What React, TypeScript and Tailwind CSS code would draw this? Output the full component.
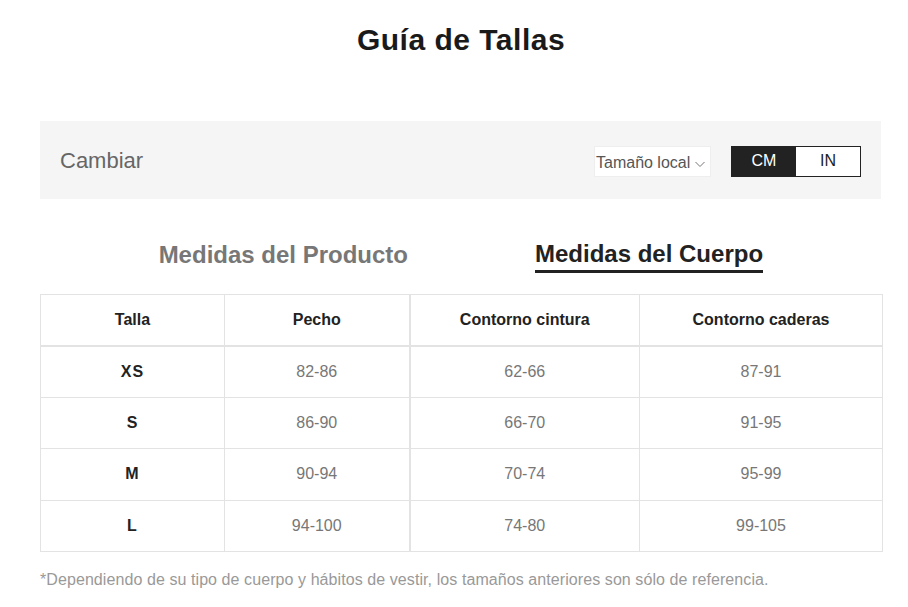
import React, { useState } from 'react';

const rows = [
  { size: 'XS', chest: '82-86', waist: '62-66', hips: '87-91' },
  { size: 'S', chest: '86-90', waist: '66-70', hips: '91-95' },
  { size: 'M', chest: '90-94', waist: '70-74', hips: '95-99' },
  { size: 'L', chest: '94-100', waist: '74-80', hips: '99-105' },
];

export default function App() {
  const [unit, setUnit] = useState<'CM' | 'IN'>('CM');
  const [tab, setTab] = useState<'product' | 'body'>('body');

  return (
    <div className="min-h-screen bg-white font-['Liberation_Sans',Arial,sans-serif]">
      <div className="w-[841px] ml-[40px]">
        <h1 className="h-[80px] pt-[20px] text-center text-[30px] leading-[40px] font-bold tracking-[0.5px] text-[#1a1a1a] pl-[1px]">
          Guía de Tallas
        </h1>

        <div className="mt-[41px] h-[78px] bg-[#f5f5f5] flex items-center justify-between pl-[20px] pr-[20px]">
          <span className="text-[22px] text-[#666]">Cambiar</span>
          <div className="flex items-center gap-[20px] pt-[2px]">
            <button className="h-[31px] w-[117px] bg-white border border-[#eee] flex items-center pl-[1px] pt-[3px] text-[16px] text-[#555]">
              Tamaño local
              <svg width="12" height="12" viewBox="0 0 12 12" className="ml-[4px] mt-[3px]">
                <path d="M1.5 4 L6 8.5 L10.5 4" fill="none" stroke="#777" strokeWidth="1" />
              </svg>
            </button>
            <div className="flex h-[31px] border border-[#222]">
              {(['CM', 'IN'] as const).map(u => (
                <button
                  key={u}
                  onClick={() => setUnit(u)}
                  className={
                    unit === u
                      ? 'w-[64px] bg-[#222] text-white text-[16px]'
                      : 'w-[64px] bg-white text-[#222] text-[16px]'
                  }
                >
                  {u}
                </button>
              ))}
            </div>
          </div>
        </div>

        <div className="flex h-[95px] pt-[38px]">
          <div className="w-[368px] flex justify-end">
            <button
              onClick={() => setTab('product')}
              className={
                tab === 'product'
                  ? 'h-[36px] text-[24px] leading-[32px] font-bold text-[#222] border-b-[3px] border-[#222]'
                  : 'h-[36px] text-[24px] leading-[32px] font-bold text-[#777]'
              }
            >
              Medidas del Producto
            </button>
          </div>
          <div className="flex-1 pl-[127px]">
            <button
              onClick={() => setTab('body')}
              className={
                tab === 'body'
                  ? 'h-[36px] text-[24px] leading-[32px] font-bold text-[#222] border-b-[3px] border-[#222]'
                  : 'h-[36px] text-[24px] leading-[32px] font-bold text-[#777]'
              }
            >
              Medidas del Cuerpo
            </button>
          </div>
        </div>

        <table className="w-[842px] border-collapse table-fixed">
          <colgroup>
            <col className="w-[184px]" />
            <col className="w-[185px]" />
            <col className="w-[230px]" />
            <col className="w-[243px]" />
          </colgroup>
          <thead>
            <tr className="h-[51px]">
              <th className="border border-[#e3e3e3] border-b-2 text-[16px] font-bold text-[#222]">Talla</th>
              <th className="border border-[#e3e3e3] border-b-2 border-r-2 text-[16px] font-bold text-[#222]">Pecho</th>
              <th className="border border-[#e3e3e3] border-b-2 text-[16px] font-bold text-[#222]">Contorno cintura</th>
              <th className="border border-[#e3e3e3] border-b-2 text-[16px] font-bold text-[#222]">Contorno caderas</th>
            </tr>
          </thead>
          <tbody>
            {rows.map(r => (
              <tr key={r.size} className="h-[51.5px]">
                <td className="border border-[#e3e3e3] text-center text-[16px] font-bold text-[#222] tracking-[1px]">{r.size}</td>
                <td className="border border-[#e3e3e3] border-r-2 text-center text-[16px] text-[#777]">{r.chest}</td>
                <td className="border border-[#e3e3e3] text-center text-[16px] text-[#777]">{r.waist}</td>
                <td className="border border-[#e3e3e3] text-center text-[16px] text-[#777]">{r.hips}</td>
              </tr>
            ))}
          </tbody>
        </table>

        <p className="mt-[17px] text-[16px] leading-[22px] tracking-[0.08px] text-[#999]">
          *Dependiendo de su tipo de cuerpo y hábitos de vestir, los tamaños anteriores son sólo de referencia.
        </p>
      </div>
    </div>
  );
}
